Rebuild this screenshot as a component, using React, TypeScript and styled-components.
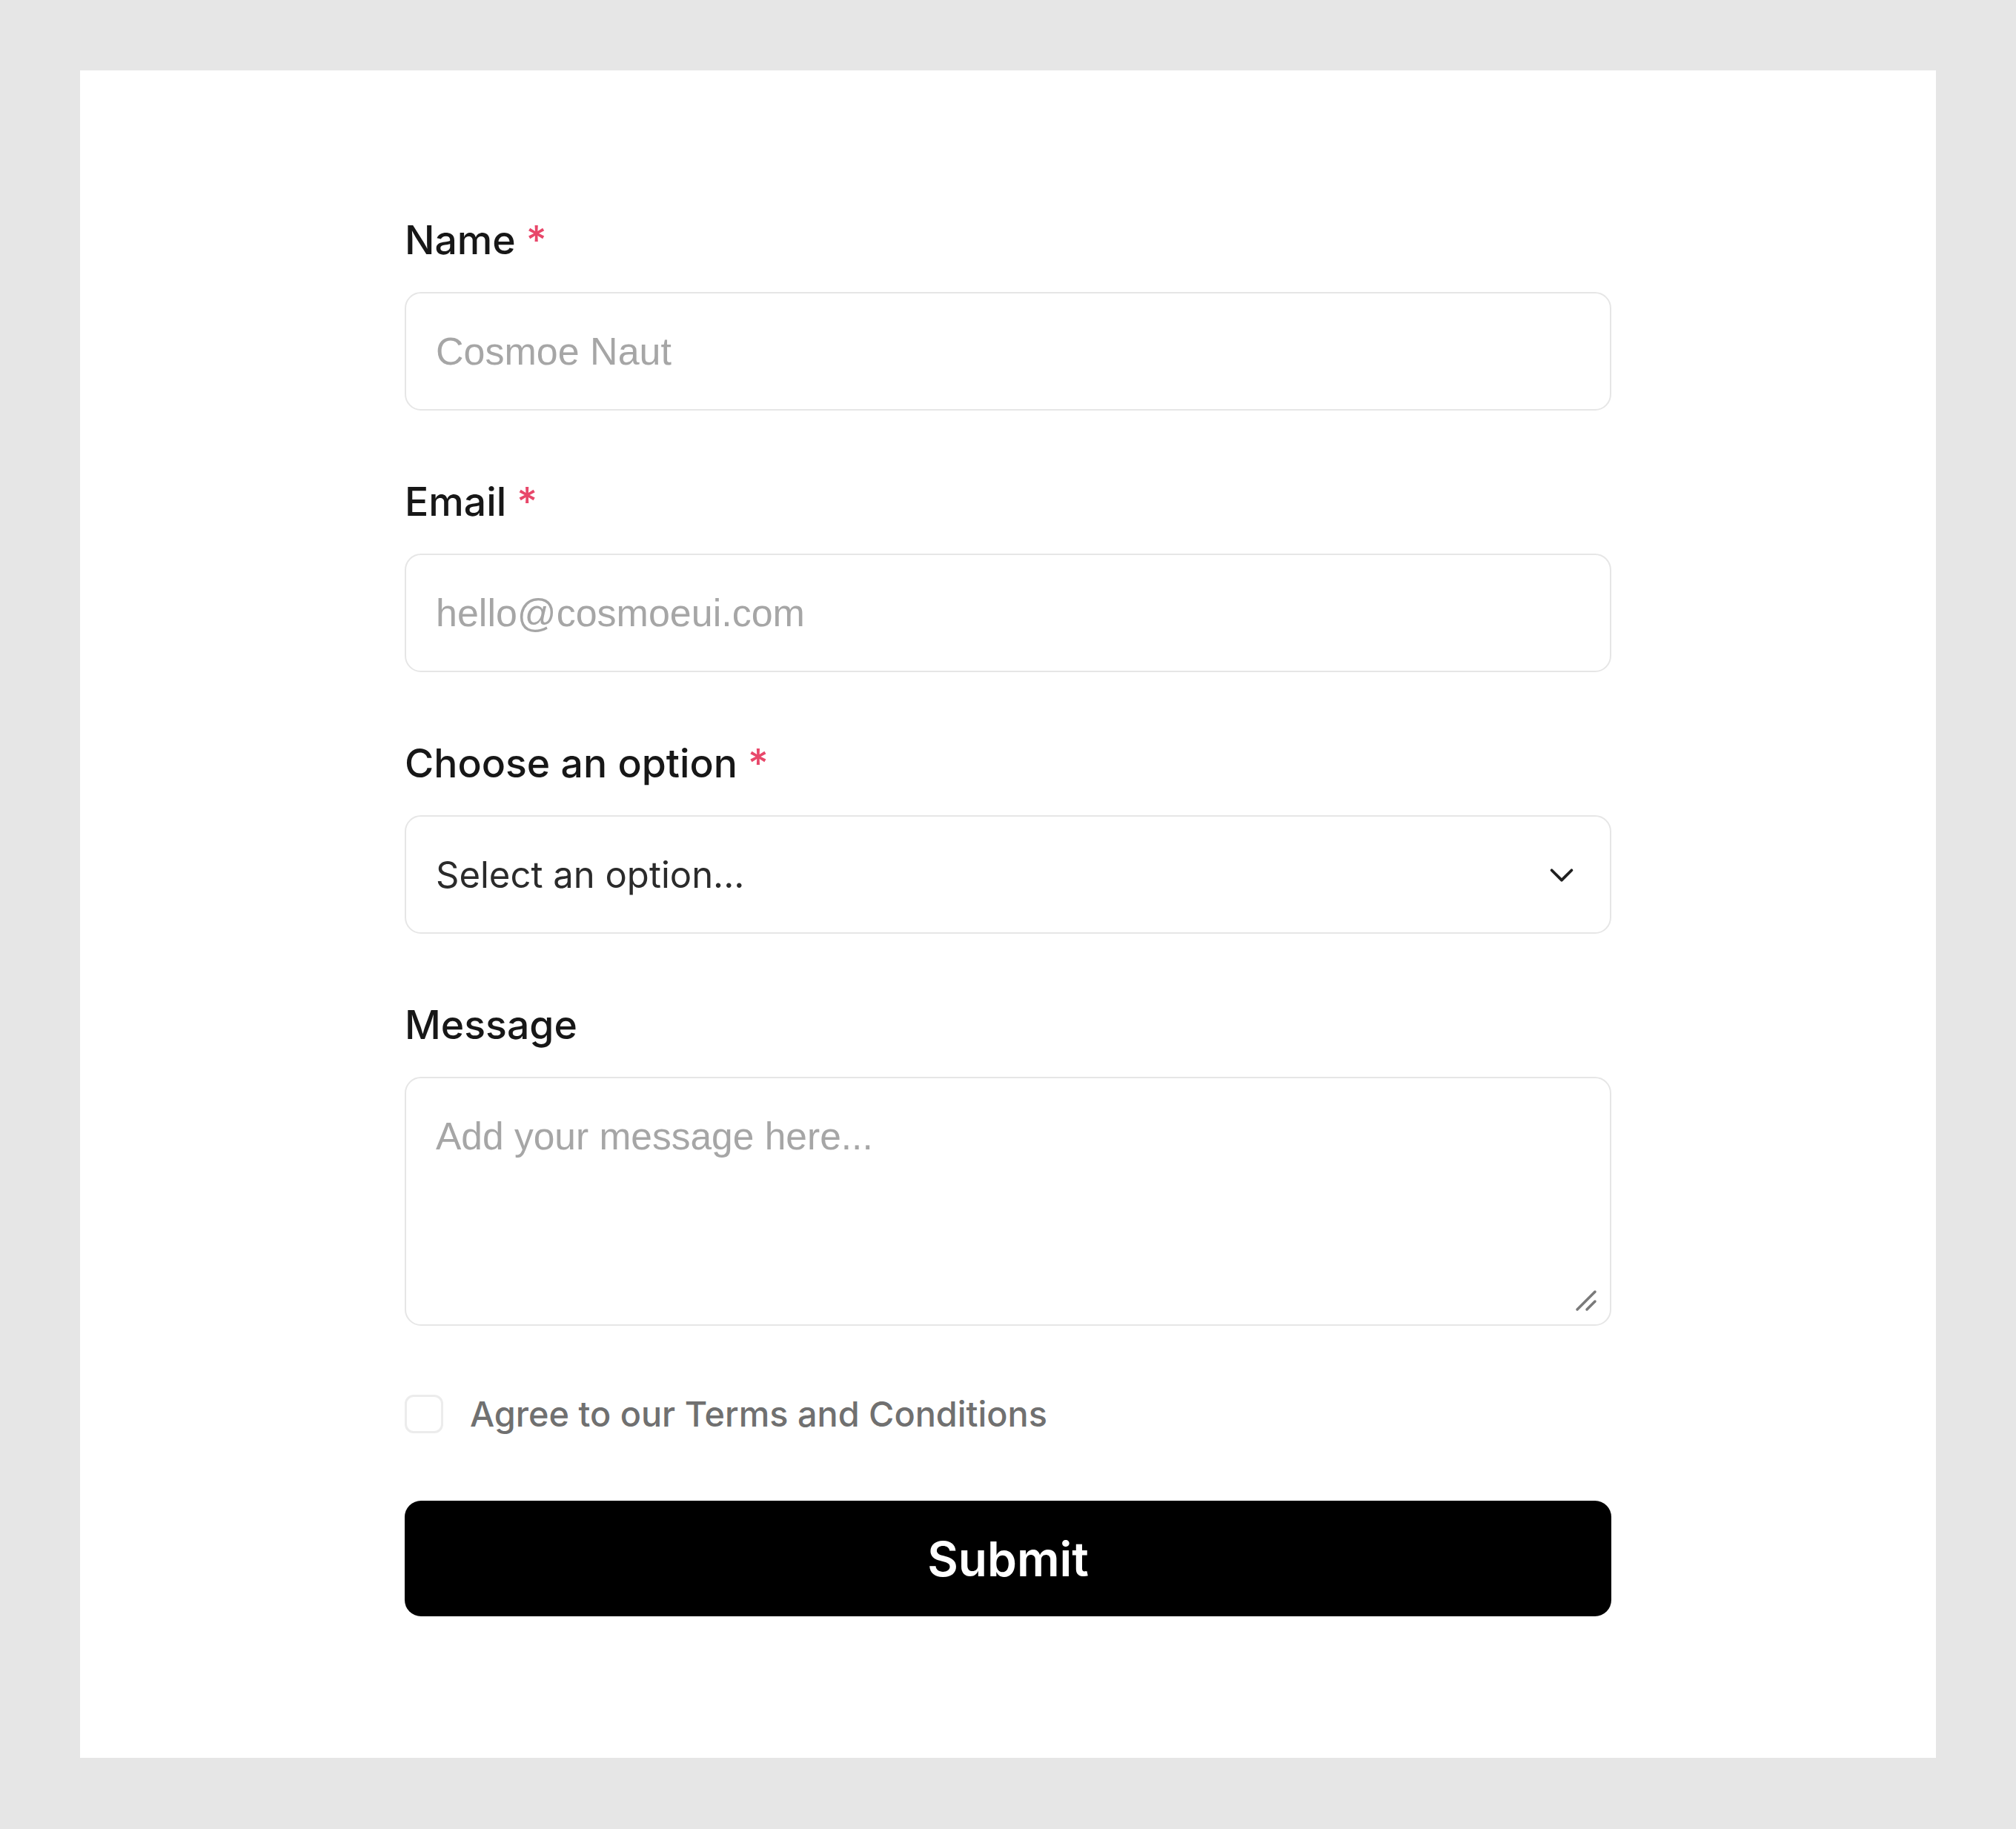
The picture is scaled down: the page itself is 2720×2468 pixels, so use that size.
import React from "react";
import styled, { createGlobalStyle } from "styled-components";

const GlobalStyle = createGlobalStyle`
	html, body {
		margin: 0;
		padding: 0;
		background: #e6e6e6;
	}
	* {
		box-sizing: border-box;
	}
`;

const Page = styled.div`
	padding: 95px 108px 97px 108px;
	background: #e6e6e6;
`;

const Card = styled.div`
	background: #ffffff;
	padding: 197px 0 191px 0;
`;

const Form = styled.form`
	width: 1628px;
	margin: 0 auto;
	display: flex;
	flex-direction: column;
	gap: 91px;
`;

const Field = styled.div`
	display: flex;
	flex-direction: column;
	gap: 38px;
`;

const Label = styled.label`
	font-family: Inter, "Liberation Sans", sans-serif;
	font-size: 53.5px;
	line-height: 64px;
	font-weight: 500;
	color: #171717;
	display: flex;
	gap: 14px;
`;

const Required = styled.span`
	color: #e8476a;
`;

const fieldBox = `
	width: 100%;
	border: 2px solid #e6e6e6;
	border-radius: 22px;
	background: #ffffff;
	outline: none;
`;

const TextInput = styled.input`
	${fieldBox}
	display: block;
	height: 160px;
	padding: 0 40px;
	font-family: "Liberation Sans", Arial, sans-serif;
	font-size: 52px;
	color: #171717;

	&::placeholder {
		color: #a6a6a6;
	}
`;

const Overlay = styled.div`
	position: relative;
`;

const Select = styled.select`
	${fieldBox}
	display: block;
	appearance: none;
	height: 160px;
	padding: 0 100px 0 40px;
	font-family: Inter, "Liberation Sans", sans-serif;
	font-size: 49px;
	color: #2b2b2b;
`;

const Chevron = styled.svg`
	position: absolute;
	right: 44px;
	top: 50%;
	width: 46px;
	height: 46px;
	transform: translateY(-50%);
	pointer-events: none;
`;

const TextArea = styled.textarea`
	${fieldBox}
	display: block;
	height: 336px;
	padding: 46px 40px;
	font-family: "Liberation Sans", Arial, sans-serif;
	font-size: 51.5px;
	line-height: 64px;
	color: #171717;
	resize: none;

	&::placeholder {
		color: #a6a6a6;
	}
`;

const ResizeGrip = styled.svg`
	position: absolute;
	right: 17px;
	bottom: 17px;
	width: 34px;
	height: 34px;
	pointer-events: none;
`;

const CheckRow = styled.label`
	display: flex;
	align-items: center;
	gap: 36px;
	height: 52px;
	margin-top: 2px;
	font-family: Inter, "Liberation Sans", sans-serif;
	font-size: 46.8px;
	font-weight: 500;
	color: #707070;
`;

const CheckBox = styled.input`
	appearance: none;
	margin: 0;
	width: 52px;
	height: 52px;
	border: 3px solid #ececec;
	border-radius: 12px;
	background: #ffffff;
`;

const SubmitButton = styled.button`
	height: 156px;
	border: none;
	border-radius: 22px;
	background: #000000;
	color: #ffffff;
	font-family: Inter, "Liberation Sans", sans-serif;
	font-size: 64px;
	font-weight: 600;
	cursor: pointer;
`;

const App: React.FC = () => {
	return (
		<Page>
			<GlobalStyle />
			<Card>
				<Form onSubmit={(e) => e.preventDefault()}>
					<Field>
						<Label>
							Name <Required>*</Required>
						</Label>
						<TextInput type="text" placeholder="Cosmoe Naut" />
					</Field>
					<Field>
						<Label>
							Email <Required>*</Required>
						</Label>
						<TextInput type="email" placeholder="hello@cosmoeui.com" />
					</Field>
					<Field>
						<Label>
							Choose an option <Required>*</Required>
						</Label>
						<Overlay>
							<Select defaultValue="">
								<option value="">Select an option...</option>
								<option value="a">Option A</option>
								<option value="b">Option B</option>
							</Select>
							<Chevron viewBox="0 0 24 24" fill="none" stroke="#1f1f1f" strokeWidth="2" strokeLinecap="round" strokeLinejoin="round">
								<path d="M5 9l7 7 7-7" />
							</Chevron>
						</Overlay>
					</Field>
					<Field>
						<Label>Message</Label>
						<Overlay>
							<TextArea placeholder="Add your message here..." />
							<ResizeGrip viewBox="0 0 34 34" fill="none" stroke="#7a7a7a" strokeWidth="3.5" strokeLinecap="round">
								<path d="M5 29L29 5" />
								<path d="M18 29L29 18" />
							</ResizeGrip>
						</Overlay>
					</Field>
					<CheckRow>
						<CheckBox type="checkbox" />
						Agree to our Terms and Conditions
					</CheckRow>
					<SubmitButton type="submit">Submit</SubmitButton>
				</Form>
			</Card>
		</Page>
	);
};

export default App;
